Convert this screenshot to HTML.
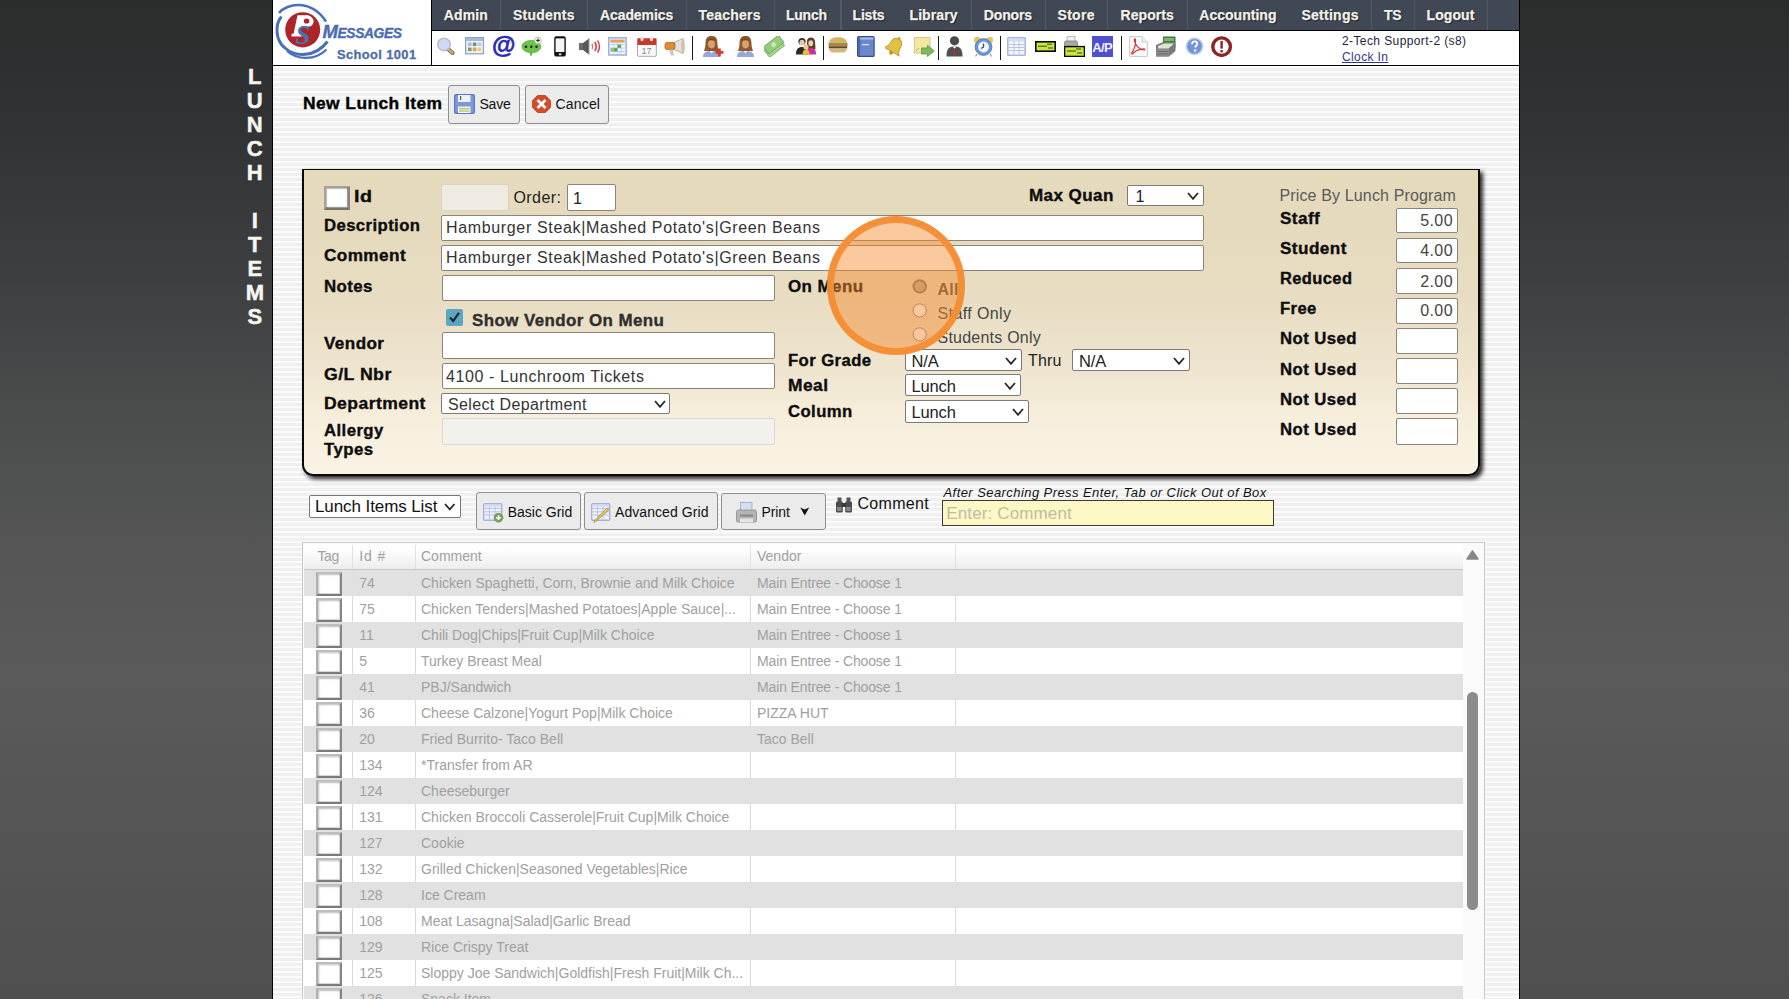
<!DOCTYPE html><html><head><meta charset="utf-8"><title>Lunch Items</title><style>
*{margin:0;padding:0;box-sizing:border-box}
html,body{width:1789px;height:999px;overflow:hidden}
body{position:relative;font-family:"Liberation Sans",sans-serif;
background:linear-gradient(180deg,#2b2c2c 0px,#313233 120px,#3c3d3e 260px,#4c4d4d 430px,#565656 560px,#5a5a5a 680px,#555 820px,#4f4f4f 999px);}
.a{position:absolute}
.t{position:absolute;white-space:pre}
</style></head><body>
<div class="a " style="left:272.0px;top:0.0px;width:1.0px;height:999.0px;background:#000;"></div>
<div class="a " style="left:273.0px;top:66.0px;width:1246.0px;height:933.0px;background:repeating-linear-gradient(180deg,#fbfbfb 0px,#fbfbfb 2.5px,#f0f0f0 2.5px,#f0f0f0 5px);"></div>
<div class="a " style="left:1519.0px;top:0.0px;width:1.0px;height:999.0px;background:#000;"></div>
<div class="a " style="left:273.0px;top:0.0px;width:158.0px;height:65.0px;background:#fff;"></div>
<div class="a " style="left:431.0px;top:0.0px;width:1.0px;height:65.0px;background:#000;"></div>
<div class="a " style="left:432.0px;top:0.0px;width:1087.0px;height:30.0px;background:#404755;"></div>
<div class="a " style="left:432.0px;top:30.0px;width:1087.0px;height:1.0px;background:#000;"></div>
<div class="a " style="left:432.0px;top:31.0px;width:1087.0px;height:34.0px;background:#fff;"></div>
<div class="a " style="left:273.0px;top:65.0px;width:1246.0px;height:1.0px;background:#000;"></div>
<div class="a " style="left:500.0px;top:0.0px;width:1.0px;height:30.0px;background:#525a68;"></div>
<div class="a " style="left:587.0px;top:0.0px;width:1.0px;height:30.0px;background:#525a68;"></div>
<div class="a " style="left:686.0px;top:0.0px;width:1.0px;height:30.0px;background:#525a68;"></div>
<div class="a " style="left:774.0px;top:0.0px;width:1.0px;height:30.0px;background:#525a68;"></div>
<div class="a " style="left:840.0px;top:0.0px;width:2.0px;height:30.0px;background:#525a68;"></div>
<div class="a " style="left:898.0px;top:0.0px;width:0.0px;height:30.0px;background:#525a68;"></div>
<div class="a " style="left:971.0px;top:0.0px;width:1.0px;height:30.0px;background:#525a68;"></div>
<div class="a " style="left:1045.0px;top:0.0px;width:1.0px;height:30.0px;background:#525a68;"></div>
<div class="a " style="left:1107.0px;top:0.0px;width:1.0px;height:30.0px;background:#525a68;"></div>
<div class="a " style="left:1187.0px;top:0.0px;width:1.0px;height:30.0px;background:#525a68;"></div>
<div class="a " style="left:1290.0px;top:0.0px;width:0.0px;height:30.0px;background:#525a68;"></div>
<div class="a " style="left:1371.0px;top:0.0px;width:1.0px;height:30.0px;background:#525a68;"></div>
<div class="a " style="left:1414.0px;top:0.0px;width:1.0px;height:30.0px;background:#525a68;"></div>
<div class="a " style="left:1487.0px;top:0.0px;width:1.0px;height:30.0px;background:#525a68;"></div>
<div class="t" style="left:443.8px;top:8.1px;font-size:14px;line-height:14px;color:#f2f2ea;font-weight:bold;letter-spacing:0.14px;text-shadow:1px 1px 1px #1a1d24;-webkit-text-stroke:0.25px #f2f2ea;">Admin</div>
<div class="t" style="left:513.0px;top:8.1px;font-size:14px;line-height:14px;color:#f2f2ea;font-weight:bold;letter-spacing:0.23px;text-shadow:1px 1px 1px #1a1d24;-webkit-text-stroke:0.25px #f2f2ea;">Students</div>
<div class="t" style="left:600.0px;top:8.1px;font-size:14px;line-height:14px;color:#f2f2ea;font-weight:bold;letter-spacing:-0.09px;text-shadow:1px 1px 1px #1a1d24;-webkit-text-stroke:0.25px #f2f2ea;">Academics</div>
<div class="t" style="left:698.5px;top:8.1px;font-size:14px;line-height:14px;color:#f2f2ea;font-weight:bold;letter-spacing:0.22px;text-shadow:1px 1px 1px #1a1d24;-webkit-text-stroke:0.25px #f2f2ea;">Teachers</div>
<div class="t" style="left:786.0px;top:8.1px;font-size:14px;line-height:14px;color:#f2f2ea;font-weight:bold;letter-spacing:-0.25px;text-shadow:1px 1px 1px #1a1d24;-webkit-text-stroke:0.25px #f2f2ea;">Lunch</div>
<div class="t" style="left:852.5px;top:8.1px;font-size:14px;line-height:14px;color:#f2f2ea;font-weight:bold;letter-spacing:-0.17px;text-shadow:1px 1px 1px #1a1d24;-webkit-text-stroke:0.25px #f2f2ea;">Lists</div>
<div class="t" style="left:909.5px;top:8.1px;font-size:14px;line-height:14px;color:#f2f2ea;font-weight:bold;letter-spacing:0.09px;text-shadow:1px 1px 1px #1a1d24;-webkit-text-stroke:0.25px #f2f2ea;">Library</div>
<div class="t" style="left:983.8px;top:8.1px;font-size:14px;line-height:14px;color:#f2f2ea;font-weight:bold;letter-spacing:-0.14px;text-shadow:1px 1px 1px #1a1d24;-webkit-text-stroke:0.25px #f2f2ea;">Donors</div>
<div class="t" style="left:1057.5px;top:8.1px;font-size:14px;line-height:14px;color:#f2f2ea;font-weight:bold;letter-spacing:0.30px;text-shadow:1px 1px 1px #1a1d24;-webkit-text-stroke:0.25px #f2f2ea;">Store</div>
<div class="t" style="left:1120.5px;top:8.1px;font-size:14px;line-height:14px;color:#f2f2ea;font-weight:bold;letter-spacing:0.07px;text-shadow:1px 1px 1px #1a1d24;-webkit-text-stroke:0.25px #f2f2ea;">Reports</div>
<div class="t" style="left:1199.3px;top:8.1px;font-size:14px;line-height:14px;color:#f2f2ea;font-weight:bold;letter-spacing:0.02px;text-shadow:1px 1px 1px #1a1d24;-webkit-text-stroke:0.25px #f2f2ea;">Accounting</div>
<div class="t" style="left:1301.5px;top:8.1px;font-size:14px;line-height:14px;color:#f2f2ea;font-weight:bold;letter-spacing:0.25px;text-shadow:1px 1px 1px #1a1d24;-webkit-text-stroke:0.25px #f2f2ea;">Settings</div>
<div class="t" style="left:1383.9px;top:8.1px;font-size:14px;line-height:14px;color:#f2f2ea;font-weight:bold;letter-spacing:-0.29px;text-shadow:1px 1px 1px #1a1d24;-webkit-text-stroke:0.25px #f2f2ea;">TS</div>
<div class="t" style="left:1426.5px;top:8.1px;font-size:14px;line-height:14px;color:#f2f2ea;font-weight:bold;letter-spacing:0.08px;text-shadow:1px 1px 1px #1a1d24;-webkit-text-stroke:0.25px #f2f2ea;">Logout</div>
<div class="t" style="left:1342.0px;top:35.2px;font-size:12px;line-height:12px;color:#1e1e3e;letter-spacing:0.40px;">2-Tech Support-2 (s8)</div>
<div class="t" style="left:1342.0px;top:51.4px;font-size:12px;line-height:12px;color:#34348e;letter-spacing:0.38px;text-decoration:underline;">Clock In</div>
<div class="t" style="left:239.8px;width:30px;text-align:center;top:65.5px;font-size:22px;line-height:22px;font-weight:bold;color:#f6f6f0;-webkit-text-stroke:0.5px #f6f6f0;">L</div>
<div class="t" style="left:239.8px;width:30px;text-align:center;top:89.5px;font-size:22px;line-height:22px;font-weight:bold;color:#f6f6f0;-webkit-text-stroke:0.5px #f6f6f0;">U</div>
<div class="t" style="left:239.8px;width:30px;text-align:center;top:113.6px;font-size:22px;line-height:22px;font-weight:bold;color:#f6f6f0;-webkit-text-stroke:0.5px #f6f6f0;">N</div>
<div class="t" style="left:239.8px;width:30px;text-align:center;top:137.6px;font-size:22px;line-height:22px;font-weight:bold;color:#f6f6f0;-webkit-text-stroke:0.5px #f6f6f0;">C</div>
<div class="t" style="left:239.8px;width:30px;text-align:center;top:161.7px;font-size:22px;line-height:22px;font-weight:bold;color:#f6f6f0;-webkit-text-stroke:0.5px #f6f6f0;">H</div>
<div class="t" style="left:239.8px;width:30px;text-align:center;top:209.8px;font-size:22px;line-height:22px;font-weight:bold;color:#f6f6f0;-webkit-text-stroke:0.5px #f6f6f0;">I</div>
<div class="t" style="left:239.8px;width:30px;text-align:center;top:233.8px;font-size:22px;line-height:22px;font-weight:bold;color:#f6f6f0;-webkit-text-stroke:0.5px #f6f6f0;">T</div>
<div class="t" style="left:239.8px;width:30px;text-align:center;top:257.9px;font-size:22px;line-height:22px;font-weight:bold;color:#f6f6f0;-webkit-text-stroke:0.5px #f6f6f0;">E</div>
<div class="t" style="left:239.8px;width:30px;text-align:center;top:281.9px;font-size:22px;line-height:22px;font-weight:bold;color:#f6f6f0;-webkit-text-stroke:0.5px #f6f6f0;">M</div>
<div class="t" style="left:239.8px;width:30px;text-align:center;top:306.0px;font-size:22px;line-height:22px;font-weight:bold;color:#f6f6f0;-webkit-text-stroke:0.5px #f6f6f0;">S</div>
<svg class="a" style="left:273.0px;top:0.0px" width="60" height="64" viewBox="0 0 60 64">
<path d="M6 13 C14 3 38 -1 53 21.5" fill="none" stroke="#4a70b6" stroke-width="2.6"/>
<path d="M8.5 16.5 C2 24 2 40 12 48 C22 57 42 58 54.5 41.5" fill="none" stroke="#4a70b6" stroke-width="3"/>
<path d="M14 51 C24 60 42 61 53.5 49.5" fill="none" stroke="#4a70b6" stroke-width="2.2"/>
<ellipse cx="29.7" cy="29.8" rx="17.5" ry="17.6" fill="#ad2529"/>
<ellipse cx="33" cy="21.3" rx="7.6" ry="6.2" fill="#fff"/><ellipse cx="33.6" cy="21" rx="2.8" ry="2.6" fill="#ad2529"/>
<path d="M24.5 15.2 L31 15.2 L26.8 35 L20.3 35Z" fill="#fff"/><path d="M18.8 33.8 L29 33.8 L28.5 36.6 L18.3 36.6Z" fill="#fff"/>
<text x="22.5" y="43.5" font-family="Liberation Serif" font-weight="bold" font-style="italic" font-size="27" fill="#4a70b6">S</text>
</svg>
<div class="t" style="left:322.5px;top:22px;font-size:18.5px;line-height:20px;font-weight:bold;font-style:italic;color:#4b6db2;letter-spacing:-0.5px;-webkit-text-stroke:0.4px #4b6db2;">M<span style="font-size:13.8px;letter-spacing:-0.35px">ESSAGES</span></div>
<div class="t" style="left:337.0px;top:48.5px;font-size:12.5px;line-height:12.5px;color:#4d6da8;transform:scaleX(1.027);transform-origin:0 0;font-weight:bold;letter-spacing:0.40px;-webkit-text-stroke:0.3px #4d6da8;">School 1001</div>
<div class="a " style="left:692.0px;top:36.0px;width:1.0px;height:24.0px;background:#1a1a1a;"></div>
<div class="a " style="left:823.0px;top:36.0px;width:1.0px;height:24.0px;background:#1a1a1a;"></div>
<div class="a " style="left:938.0px;top:36.0px;width:1.0px;height:24.0px;background:#1a1a1a;"></div>
<div class="a " style="left:1000.0px;top:36.0px;width:1.0px;height:24.0px;background:#1a1a1a;"></div>
<div class="a " style="left:1121.0px;top:36.0px;width:1.0px;height:24.0px;background:#1a1a1a;"></div>
<svg class="a" style="left:436.0px;top:37.0px" width="19" height="18" viewBox="0 0 19 18"><line x1="11.5" y1="11.5" x2="16.5" y2="16" stroke="#6b5a3a" stroke-width="4" stroke-linecap="round"/><line x1="11.5" y1="11.5" x2="16.5" y2="16" stroke="#c8b078" stroke-width="2.4" stroke-linecap="round"/><circle cx="8" cy="7.4" r="6.3" fill="#cfdaf2" stroke="#b4bac6" stroke-width="1.4"/></svg>
<svg class="a" style="left:465.0px;top:37.0px" width="19" height="17.5" viewBox="0 0 19 17.5"><rect x="0.6" y="0.6" width="17.8" height="16.2" fill="#eef2fb" stroke="#8d9dc6" stroke-width="1.2"/><rect x="1" y="1" width="17" height="3" fill="#a9b8df"/><rect x="3" y="5.5" width="3.6" height="3.6" fill="#a9bde8"/><rect x="7.8" y="5.5" width="3.6" height="3.6" fill="#6e9a5c"/><rect x="12.6" y="5.5" width="3.6" height="3.6" fill="#b9c9ee"/><rect x="3" y="10.6" width="3.6" height="3.6" fill="#7ba05e"/><rect x="7.8" y="10.6" width="3.6" height="3.6" fill="#df9e55"/><rect x="12.6" y="10.6" width="3.6" height="3.6" fill="#e6cf74"/></svg>
<div class="t" style="left:492px;top:33px;font-size:24px;line-height:24px;font-weight:bold;color:#2a2ab4;-webkit-text-stroke:0.6px #2a2ab4;">@</div>
<svg class="a" style="left:521.0px;top:36.0px" width="22" height="21" viewBox="0 0 22 21"><path d="M10.5 4.5 C16 4.5 19.8 7 19.8 10.5 C19.8 14 16 16.5 11.5 16.5 L10 19.8 L8.6 16.4 C4 16 1 13.6 1 10.5 C1 7 5 4.5 10.5 4.5Z" fill="#6cc24a" stroke="#5aa83c" stroke-width="0.8"/><circle cx="5" cy="10.8" r="1.3" fill="#1d2a16"/><circle cx="10.3" cy="10.8" r="1.3" fill="#1d2a16"/><circle cx="15.5" cy="10.8" r="1.3" fill="#1d2a16"/><circle cx="17" cy="4.4" r="3.4" fill="#f4f8f0" stroke="#9cc08a" stroke-width="0.8"/><path d="M17 2.6 V6.2 M15.2 4.4 H18.8" stroke="#222" stroke-width="1"/></svg>
<svg class="a" style="left:554.0px;top:36.0px" width="12" height="21" viewBox="0 0 12 21"><rect x="0.2" y="0.2" width="11.6" height="20.4" rx="2.2" fill="#111"/><rect x="1.6" y="2.4" width="8.8" height="13.6" fill="#f4f4f4"/><rect x="4.8" y="17.4" width="2.6" height="1.8" fill="#ddd"/></svg>
<svg class="a" style="left:578.0px;top:38.0px" width="23" height="17" viewBox="0 0 23 17"><rect x="1" y="5" width="4.5" height="7" fill="#6a6a6a"/><path d="M5 5 L11 0.5 L11 16.5 L5 12Z" fill="#585858"/><path d="M11 0.5 L11 16.5" stroke="#999" stroke-width="1"/><path d="M14 6 Q15.5 8.5 14 11" fill="none" stroke="#d87080" stroke-width="1.6"/><path d="M16.8 4 Q19.6 8.5 16.8 13" fill="none" stroke="#cf4a5a" stroke-width="1.8"/><path d="M19.6 2.5 Q23.2 8.5 19.6 14.5" fill="none" stroke="#c83848" stroke-width="1.4"/></svg>
<svg class="a" style="left:608.0px;top:37.0px" width="19" height="19" viewBox="0 0 19 19"><rect x="0.8" y="0.8" width="17.4" height="17.2" fill="#eef4ff" stroke="#a3b3de" stroke-width="1.6"/><rect x="2.4" y="2.6" width="14.2" height="3" fill="#e4a25a"/><path d="M2.4 7.5 H16.6 M2.4 11 H16.6 M2.4 14.5 H16.6 M6 5.6 V16.5 M9.5 5.6 V16.5 M13 5.6 V16.5" stroke="#b8c8e8" stroke-width="0.8"/><rect x="9.6" y="7.6" width="3.3" height="3.3" fill="#5ea050"/><rect x="6.1" y="11.1" width="3.3" height="3.3" fill="#5ea050"/><rect x="2.6" y="11.1" width="3.3" height="3.3" fill="#8cc070"/></svg>
<svg class="a" style="left:636.5px;top:36.0px" width="20" height="21" viewBox="0 0 20 21"><rect x="0.5" y="2.5" width="18.8" height="17.8" rx="1" fill="#fafafa" stroke="#a8a8a8" stroke-width="1"/><rect x="0.5" y="2.5" width="18.8" height="6.5" fill="#c8392b"/><rect x="3.5" y="0.5" width="3" height="4.5" rx="1" fill="#e8e0d8"/><rect x="13" y="0.5" width="3" height="4.5" rx="1" fill="#e8e0d8"/><text x="4.5" y="17.5" font-family="Liberation Sans" font-size="9" fill="#888">17</text></svg>
<svg class="a" style="left:664.0px;top:38.0px" width="22" height="19" viewBox="0 0 22 19"><path d="M10 4.5 L19 0.5 L19 15.5 L10 11.5Z" fill="#e2e2e2" stroke="#b8b0a0" stroke-width="1"/><ellipse cx="19" cy="8" rx="1.8" ry="7.4" fill="#d0c0a8"/><rect x="1" y="4.5" width="10" height="7" rx="2" fill="#e08a32" stroke="#b06020" stroke-width="0.8"/><path d="M5 11.5 L7 17.5 L10 17.5 L9 11.5Z" fill="#c8c8c8"/></svg>
<svg class="a" style="left:703.0px;top:36.0px" width="21" height="21" viewBox="0 0 21 21"><path d="M2.5 8 C2.5 1.5 5 0 8.5 0 C12 0 14.5 1.5 14.5 8 C14.5 11 15.5 13 16 15 L1 15 C1.5 13 2.5 11 2.5 8Z" fill="#93582a"/><ellipse cx="8.5" cy="8" rx="3.4" ry="4.4" fill="#d6a270"/><path d="M5 3.5 C6 2 11 2 12 4 L12 5 C10 4 7 4 5 5Z" fill="#7a4520"/><path d="M0 21 C0 16.5 3 15 8.5 15 C14 15 17 16.5 17 21Z" fill="#93a9de"/><path d="M6.5 15 L8.5 17.5 L10.5 15Z" fill="#f4f4f4"/><path d="M12.5 15 H15 V12.5 H17.8 V15 H20.5 V17.8 H17.8 V20.6 H15 V17.8 H12.5Z" fill="#d93a2a"/></svg>
<svg class="a" style="left:737.0px;top:36.0px" width="21" height="21" viewBox="0 0 21 21"><path d="M2.5 8 C2.5 1.5 5 0 8.5 0 C12 0 14.5 1.5 14.5 8 C14.5 11 15.5 13 16 15 L1 15 C1.5 13 2.5 11 2.5 8Z" fill="#93582a"/><ellipse cx="8.5" cy="8" rx="3.4" ry="4.4" fill="#d6a270"/><path d="M5 3.5 C6 2 11 2 12 4 L12 5 C10 4 7 4 5 5Z" fill="#7a4520"/><path d="M0 21 C0 16.5 3 15 8.5 15 C14 15 17 16.5 17 21Z" fill="#93a9de"/><path d="M6.5 15 L8.5 17.5 L10.5 15Z" fill="#f4f4f4"/></svg>
<svg class="a" style="left:764.0px;top:36.0px" width="21" height="21" viewBox="0 0 21 21"><g transform="rotate(-38 10.5 10.5)"><rect x="0" y="7" width="19" height="9" fill="#a6d88e" stroke="#6aa458" stroke-width="0.8"/><rect x="1.5" y="4" width="19" height="9" fill="#94cc7c" stroke="#6aa458" stroke-width="0.8"/><circle cx="11" cy="8.5" r="2.4" fill="#c8ecb8"/></g></svg>
<svg class="a" style="left:796.0px;top:37.0px" width="20" height="18" viewBox="0 0 20 18"><circle cx="6" cy="4.5" r="3.6" fill="#2b2b2b"/><ellipse cx="6" cy="5.8" rx="2.6" ry="3" fill="#e8c8a8"/><path d="M0 17.5 C0 12 2 10 6 10 C10 10 11 12 11 17.5Z" fill="#2a2a2a"/><path d="M11 4 C11 1.5 13 0.5 15 0.5 C17.5 0.5 19 2 19 5 L19.5 12 L11 12Z" fill="#5a3a2a"/><ellipse cx="14.8" cy="6.3" rx="2.4" ry="3" fill="#f0d0b0"/><path d="M10 17.5 C10 12.5 12 11 15 11 C18.5 11 20 12.5 20 17.5Z" fill="#c8309a"/><circle cx="10" cy="10" r="2.6" fill="#f0c890"/><path d="M6.5 17.5 C6.5 14 8 12.5 10 12.5 C12 12.5 13.5 14 13.5 17.5Z" fill="#e8c030"/></svg>
<svg class="a" style="left:828.0px;top:37.0px" width="20" height="16" viewBox="0 0 20 16"><path d="M1 6.5 C1 2 5 0.3 10 0.3 C15 0.3 19 2 19 6.5Z" fill="#d4b26a"/><rect x="0.5" y="6" width="19" height="2.2" fill="#7aa040"/><rect x="0.5" y="8" width="19" height="1.4" fill="#e86a3a"/><rect x="0.8" y="9.3" width="18.4" height="2.2" fill="#5a4a28"/><path d="M1 11.4 H19 C19 14 17 15.6 14 15.6 H6 C3 15.6 1 14 1 11.4Z" fill="#d8b878"/></svg>
<svg class="a" style="left:857.0px;top:36.0px" width="18" height="21" viewBox="0 0 18 21"><rect x="0.6" y="0.6" width="16.5" height="19.8" rx="1" fill="#6a88cc" stroke="#3a4c88" stroke-width="1.2"/><rect x="1.5" y="1.5" width="15" height="2" fill="#a8bcec"/><rect x="5" y="8" width="7" height="1.2" fill="#dce6fa"/><rect x="1.2" y="1.2" width="2" height="19" fill="#4e66aa"/></svg>
<svg class="a" style="left:885.0px;top:36.0px" width="20" height="21" viewBox="0 0 20 21"><g transform="rotate(30 10 10)"><path d="M10 2 C6 2 4.5 5 4.5 9 C4.5 13 3 15 1.5 16.5 H18.5 C17 15 15.5 13 15.5 9 C15.5 5 14 2 10 2Z" fill="#e2c043" stroke="#b89a28" stroke-width="0.9"/><circle cx="10" cy="1.6" r="1.6" fill="#c8a838"/><circle cx="10" cy="17.8" r="2" fill="#b89a28"/></g></svg>
<svg class="a" style="left:914.0px;top:37.0px" width="21" height="20" viewBox="0 0 21 20"><rect x="0.5" y="0.5" width="15.5" height="15.5" fill="#f4e8a0" stroke="#d8c888" stroke-width="1"/><path d="M2 14 L5 11" stroke="#c8a878" stroke-width="1"/><path d="M7.5 11 H13.5 V8.3 L20.2 14 L13.5 19.6 V17 H7.5Z" fill="#7cba5a" stroke="#5a9840" stroke-width="0.8"/></svg>
<svg class="a" style="left:945.5px;top:36.0px" width="17" height="21" viewBox="0 0 17 21"><circle cx="8.5" cy="4.8" r="4.6" fill="#4a4a4a"/><path d="M0.5 20.5 C0.5 12.5 3 10.5 8.5 10.5 C14 10.5 16.5 12.5 16.5 20.5Z" fill="#505050"/><path d="M6.5 10.6 L8.5 12.8 L10.5 10.6Z" fill="#fff"/><path d="M8.5 11.8 L7.3 18 L8.5 19.4 L9.7 18Z" fill="#d02828"/></svg>
<svg class="a" style="left:973.0px;top:36.0px" width="21" height="21" viewBox="0 0 21 21"><circle cx="4.2" cy="4" r="3.3" fill="#e6c850"/><circle cx="16.8" cy="4" r="3.3" fill="#e6c850"/><circle cx="10.5" cy="11" r="8.4" fill="#6b96dc" stroke="#4a74b8" stroke-width="0.8"/><circle cx="10.5" cy="11" r="5.4" fill="#f6f8fc"/><path d="M10.5 7.5 V11 L8 12.5" stroke="#555" stroke-width="1.4" fill="none"/><path d="M4 18 L2.5 20.5 M17 18 L18.5 20.5" stroke="#999" stroke-width="1.2"/></svg>
<svg class="a" style="left:1007.0px;top:37.0px" width="19" height="19" viewBox="0 0 19 19"><rect x="0.8" y="0.8" width="17.4" height="17.4" rx="0.8" fill="#f6f8fe" stroke="#a6b6e0" stroke-width="1.6"/><rect x="2" y="2" width="15" height="2.5" fill="#cfdcf4"/><path d="M2 7.5 H17 M2 10.5 H17 M2 13.5 H17 M7 4.5 V17 M12 4.5 V17" stroke="#b0c0e4" stroke-width="0.9"/></svg>
<svg class="a" style="left:1035.0px;top:41.0px" width="21" height="11" viewBox="0 0 21 11"><rect x="0.8" y="0.8" width="19.4" height="9.4" fill="#c6e640" stroke="#0a0a0a" stroke-width="1.6"/><path d="M3 5.2 H12 M12 3.2 H17 M13 7 H18" stroke="#2a3a10" stroke-width="0.9"/></svg>
<svg class="a" style="left:1063.5px;top:36.0px" width="21" height="21" viewBox="0 0 21 21"><rect x="3" y="0.5" width="8" height="5" fill="#f0f0f0" stroke="#aaa" stroke-width="0.8"/><rect x="0.5" y="5" width="13" height="7" rx="1.5" fill="#a8a8a8" stroke="#808080" stroke-width="0.8"/><rect x="0.6" y="10.6" width="19.8" height="9.8" fill="#c6e640" stroke="#0a0a0a" stroke-width="1.4"/><path d="M3 15 H12 M12 13 H17 M13 17 H18" stroke="#2a3a10" stroke-width="0.9"/></svg>
<div class="a " style="left:1092.0px;top:36.0px;width:21.0px;height:21.0px;background:#4f50cf;"></div>
<div class="t" style="left:1092.3px;top:40.5px;font-size:13px;line-height:13px;font-weight:bold;color:#f0f0ff;letter-spacing:-0.6px">A/P</div>
<svg class="a" style="left:1129.0px;top:36.0px" width="19" height="21" viewBox="0 0 19 21"><path d="M0.6 0.6 H13 L18.4 6 V20.4 H0.6Z" fill="#fbfbfb" stroke="#c8c8c8" stroke-width="1"/><path d="M13 0.6 V6 H18.4" fill="#eee" stroke="#c8c8c8" stroke-width="0.8"/><path d="M2 18 C5 14 7 8 6.5 3.5 C6 2 5 3 5.5 5 C6.5 9 10 13.5 15 14 C16.5 14 16 12.5 14 12.8 C10 13.3 5.5 15 3 18.5" fill="none" stroke="#d03a3a" stroke-width="1.2"/></svg>
<svg class="a" style="left:1155.0px;top:36.0px" width="21" height="21" viewBox="0 0 21 21"><path d="M8 0.5 H20.5 V12 H8Z" fill="#3e7a3a"/><rect x="9" y="2" width="10" height="3" fill="#7ab870"/><path d="M1 9 L8 6 L20.5 6 L20.5 15 L14 20.5 L1 20.5Z" fill="#7a7a7a"/><path d="M3 10 L9 7.5 L19 7.5 L13.5 12.5 L3 12.5Z" fill="#d8e8c8"/><path d="M1 13 H14 V20.5 H1Z" fill="#8c8c8c"/><path d="M2 15.5 H13 M2 18 H13" stroke="#666" stroke-width="0.8"/></svg>
<svg class="a" style="left:1185.0px;top:37.0px" width="19" height="19" viewBox="0 0 19 19"><circle cx="9.5" cy="9.3" r="9" fill="#c4d2f2"/><circle cx="9.5" cy="9.3" r="7.4" fill="#7592d2"/><path d="M7 7.2 C7 5.2 8.2 4.4 9.6 4.4 C11.2 4.4 12.2 5.4 12.2 6.8 C12.2 8.4 10.2 8.8 10.2 10.6" fill="none" stroke="#fff" stroke-width="1.9"/><circle cx="10.1" cy="13.4" r="1.2" fill="#fff"/></svg>
<svg class="a" style="left:1211.0px;top:36.0px" width="22" height="22" viewBox="0 0 22 22"><circle cx="10.6" cy="10.7" r="8.8" fill="#fff" stroke="#8e2424" stroke-width="3.4"/><rect x="9.4" y="5" width="2.4" height="7.6" fill="#8e2424"/><rect x="9.4" y="14" width="2.4" height="2.4" fill="#8e2424"/></svg>
<div class="a " style="left:302.0px;top:169.0px;width:1178.0px;height:307.0px;border:2px solid #0a0a0a;border-top-width:1.5px;border-radius:0 0 11px 11px;background:linear-gradient(180deg,#e6dabd 0px,#e6dabe 60px,#e8ddc2 130px,#efe5cf 200px,#f8f0df 260px,#fbf3e3 307px);box-shadow:3px 3px 4px rgba(0,0,0,0.85);"></div>
<div class="t" style="left:353.8px;top:188.8px;font-size:16px;line-height:16px;color:#0d0d0d;transform:scaleX(1.231);transform-origin:0 0;font-weight:bold;letter-spacing:0.40px;-webkit-text-stroke:0.35px currentColor;">Id</div>
<div class="t" style="left:323.9px;top:217.6px;font-size:16px;line-height:16px;color:#0d0d0d;transform:scaleX(1.043);transform-origin:0 0;font-weight:bold;letter-spacing:0.40px;-webkit-text-stroke:0.35px currentColor;">Description</div>
<div class="t" style="left:323.9px;top:248.1px;font-size:16px;line-height:16px;color:#0d0d0d;transform:scaleX(1.071);transform-origin:0 0;font-weight:bold;letter-spacing:0.40px;-webkit-text-stroke:0.35px currentColor;">Comment</div>
<div class="t" style="left:324.0px;top:279.1px;font-size:16px;line-height:16px;color:#0d0d0d;transform:scaleX(1.053);transform-origin:0 0;font-weight:bold;letter-spacing:0.40px;-webkit-text-stroke:0.35px currentColor;">Notes</div>
<div class="t" style="left:324.0px;top:336.1px;font-size:16px;line-height:16px;color:#0d0d0d;transform:scaleX(1.067);transform-origin:0 0;font-weight:bold;letter-spacing:0.40px;-webkit-text-stroke:0.35px currentColor;">Vendor</div>
<div class="t" style="left:324.0px;top:366.6px;font-size:16px;line-height:16px;color:#0d0d0d;transform:scaleX(1.107);transform-origin:0 0;font-weight:bold;letter-spacing:0.40px;-webkit-text-stroke:0.35px currentColor;">G/L Nbr</div>
<div class="t" style="left:324.0px;top:396.1px;font-size:16px;line-height:16px;color:#0d0d0d;transform:scaleX(1.096);transform-origin:0 0;font-weight:bold;letter-spacing:0.40px;-webkit-text-stroke:0.35px currentColor;">Department</div>
<div class="t" style="left:324.0px;top:422.6px;font-size:16px;line-height:16px;color:#0d0d0d;transform:scaleX(1.047);transform-origin:0 0;font-weight:bold;letter-spacing:0.40px;-webkit-text-stroke:0.35px currentColor;">Allergy</div>
<div class="t" style="left:324.0px;top:442.1px;font-size:16px;line-height:16px;color:#0d0d0d;transform:scaleX(1.050);transform-origin:0 0;font-weight:bold;letter-spacing:0.40px;-webkit-text-stroke:0.35px currentColor;">Types</div>
<div class="t" style="left:1029.0px;top:188.1px;font-size:16px;line-height:16px;color:#0d0d0d;transform:scaleX(1.064);transform-origin:0 0;font-weight:bold;letter-spacing:0.40px;-webkit-text-stroke:0.35px currentColor;">Max Quan</div>
<div class="t" style="left:787.7px;top:279.4px;font-size:16px;line-height:16px;color:#0d0d0d;transform:scaleX(1.059);transform-origin:0 0;font-weight:bold;letter-spacing:0.40px;-webkit-text-stroke:0.35px currentColor;">On Menu</div>
<div class="t" style="left:787.5px;top:352.9px;font-size:16px;line-height:16px;color:#0d0d0d;transform:scaleX(1.042);transform-origin:0 0;font-weight:bold;letter-spacing:0.40px;-webkit-text-stroke:0.35px currentColor;">For Grade</div>
<div class="t" style="left:787.5px;top:378.0px;font-size:16px;line-height:16px;color:#0d0d0d;transform:scaleX(1.088);transform-origin:0 0;font-weight:bold;letter-spacing:0.40px;-webkit-text-stroke:0.35px currentColor;">Meal</div>
<div class="t" style="left:787.5px;top:403.8px;font-size:16px;line-height:16px;color:#0d0d0d;transform:scaleX(1.045);transform-origin:0 0;font-weight:bold;letter-spacing:0.40px;-webkit-text-stroke:0.35px currentColor;">Column</div>
<div class="t" style="left:1279.5px;top:210.5px;font-size:16px;line-height:16px;color:#0d0d0d;transform:scaleX(1.071);transform-origin:0 0;font-weight:bold;letter-spacing:0.40px;-webkit-text-stroke:0.35px currentColor;">Staff</div>
<div class="t" style="left:1279.5px;top:240.7px;font-size:16px;line-height:16px;color:#0d0d0d;transform:scaleX(1.072);transform-origin:0 0;font-weight:bold;letter-spacing:0.40px;-webkit-text-stroke:0.35px currentColor;">Student</div>
<div class="t" style="left:1279.5px;top:270.8px;font-size:16px;line-height:16px;color:#0d0d0d;transform:scaleX(1.029);transform-origin:0 0;font-weight:bold;letter-spacing:0.40px;-webkit-text-stroke:0.35px currentColor;">Reduced</div>
<div class="t" style="left:1279.5px;top:300.9px;font-size:16px;line-height:16px;color:#0d0d0d;transform:scaleX(1.037);transform-origin:0 0;font-weight:bold;letter-spacing:0.40px;-webkit-text-stroke:0.35px currentColor;">Free</div>
<div class="t" style="left:1279.5px;top:330.8px;font-size:16px;line-height:16px;color:#0d0d0d;transform:scaleX(1.046);transform-origin:0 0;font-weight:bold;letter-spacing:0.40px;-webkit-text-stroke:0.35px currentColor;">Not Used</div>
<div class="t" style="left:1279.5px;top:361.8px;font-size:16px;line-height:16px;color:#0d0d0d;transform:scaleX(1.046);transform-origin:0 0;font-weight:bold;letter-spacing:0.40px;-webkit-text-stroke:0.35px currentColor;">Not Used</div>
<div class="t" style="left:1279.5px;top:391.9px;font-size:16px;line-height:16px;color:#0d0d0d;transform:scaleX(1.046);transform-origin:0 0;font-weight:bold;letter-spacing:0.40px;-webkit-text-stroke:0.35px currentColor;">Not Used</div>
<div class="t" style="left:1279.5px;top:422.3px;font-size:16px;line-height:16px;color:#0d0d0d;transform:scaleX(1.046);transform-origin:0 0;font-weight:bold;letter-spacing:0.40px;-webkit-text-stroke:0.35px currentColor;">Not Used</div>
<div class="t" style="left:472.0px;top:312.9px;font-size:16px;line-height:16px;color:#2e2e2e;transform:scaleX(1.058);transform-origin:0 0;font-weight:bold;letter-spacing:0.40px;-webkit-text-stroke:0.35px currentColor;">Show Vendor On Menu</div>
<div class="t" style="left:513.5px;top:189.8px;font-size:16px;line-height:16px;color:#1e1e1e;letter-spacing:0.41px;">Order:</div>
<div class="t" style="left:1279.5px;top:188.1px;font-size:16px;line-height:16px;color:#5a5a5a;letter-spacing:0.14px;">Price By Lunch Program</div>
<div class="t" style="left:937.5px;top:306.4px;font-size:16px;line-height:16px;color:#454545;letter-spacing:0.39px;">Staff Only</div>
<div class="t" style="left:937.5px;top:329.9px;font-size:16px;line-height:16px;color:#454545;letter-spacing:0.23px;">Students Only</div>
<div class="t" style="left:1028.0px;top:352.9px;font-size:16px;line-height:16px;color:#1e1e1e;letter-spacing:0.13px;">Thru</div>
<div class="t" style="left:937.5px;top:281.7px;font-size:16px;line-height:16px;color:#5a4a3a;font-weight:bold;letter-spacing:0.28px;">All</div>
<div class="a " style="left:324.0px;top:186.0px;width:26.0px;height:24.0px;background:#fff;border:2px solid #a6a29a;border-right-color:#8a867e;border-bottom-color:#78746c;box-shadow:inset 1px 1px 1px rgba(60,55,45,0.35), inset -1px -1px 1px rgba(60,55,45,0.55);"></div>
<div class="a " style="left:441.0px;top:184.0px;width:68.0px;height:27.0px;background:#efebe1;border:1px solid #d9d3c6;border-radius:2px;"></div>
<div class="a " style="left:567.0px;top:184.0px;width:49.0px;height:27.0px;background:#fff;border:1px solid #8a857c;border-radius:2px;"></div>
<div class="t" style="left:573.0px;top:190.6px;font-size:16px;line-height:16px;color:#222;">1</div>
<div class="a " style="left:441.0px;top:215.0px;width:763.0px;height:26.0px;background:#fff;border:1px solid #8a857c;border-radius:2px;"></div>
<div class="t" style="left:446.0px;top:219.8px;font-size:16px;line-height:16px;color:#333;letter-spacing:0.65px;">Hamburger Steak|Mashed Potato's|Green Beans</div>
<div class="a " style="left:441.0px;top:245.0px;width:763.0px;height:26.0px;background:#fff;border:1px solid #8a857c;border-radius:2px;"></div>
<div class="t" style="left:446.0px;top:250.1px;font-size:16px;line-height:16px;color:#333;letter-spacing:0.65px;">Hamburger Steak|Mashed Potato's|Green Beans</div>
<div class="a " style="left:442.0px;top:275.0px;width:333.0px;height:26.0px;background:#fff;border:1px solid #8a857c;border-radius:2px;"></div>
<div class="a " style="left:442.0px;top:332.0px;width:333.0px;height:27.0px;background:#fff;border:1px solid #8a857c;border-radius:2px;"></div>
<div class="a " style="left:442.0px;top:363.0px;width:333.0px;height:26.0px;background:#fff;border:1px solid #8a857c;border-radius:2px;"></div>
<div class="t" style="left:446.0px;top:369.1px;font-size:16px;line-height:16px;color:#333;letter-spacing:0.60px;">4100 - Lunchroom Tickets</div>
<div class="a " style="left:442.0px;top:418.0px;width:333.0px;height:27.0px;background:#f3f1ec;border:1px solid #dcd8d0;border-radius:2px;"></div>
<div class="a " style="left:441.0px;top:393.0px;width:229.0px;height:21.0px;background:#fff;border:1px solid #7d7a76;border-radius:2px;"></div>
<div class="t" style="left:448.0px;top:396.6px;font-size:16px;line-height:16px;color:#333;letter-spacing:0.37px;">Select Department</div>
<svg class="a" style="left:654.0px;top:399.7px" width="12" height="8" viewBox="0 0 12 8"><path d="M1 1 L6.0 6.8 L11 1" fill="none" stroke="#262626" stroke-width="1.8"/></svg>
<div class="a " style="left:1127.0px;top:185.0px;width:77.0px;height:21.0px;background:#fff;border:1px solid #7d7a76;border-radius:2px;"></div>
<div class="t" style="left:1135.5px;top:189.1px;font-size:16px;line-height:16px;color:#222;">1</div>
<svg class="a" style="left:1187.3px;top:191.6px" width="12" height="8" viewBox="0 0 12 8"><path d="M1 1 L6.0 6.8 L11 1" fill="none" stroke="#262626" stroke-width="1.8"/></svg>
<div class="a " style="left:905.0px;top:349.0px;width:117.0px;height:22.0px;background:#fff;border:1px solid #7d7a76;border-radius:2px;"></div>
<div class="t" style="left:911.5px;top:352.6px;font-size:16.5px;line-height:16.5px;color:#222;letter-spacing:-0.15px;">N/A</div>
<svg class="a" style="left:1005.0px;top:356.6px" width="12" height="8" viewBox="0 0 12 8"><path d="M1 1 L6.0 6.8 L11 1" fill="none" stroke="#262626" stroke-width="1.8"/></svg>
<div class="a " style="left:1072.0px;top:349.0px;width:118.0px;height:22.0px;background:#fff;border:1px solid #7d7a76;border-radius:2px;"></div>
<div class="t" style="left:1079.0px;top:352.6px;font-size:16.5px;line-height:16.5px;color:#222;letter-spacing:-0.15px;">N/A</div>
<svg class="a" style="left:1173.3px;top:356.6px" width="12" height="8" viewBox="0 0 12 8"><path d="M1 1 L6.0 6.8 L11 1" fill="none" stroke="#262626" stroke-width="1.8"/></svg>
<div class="a " style="left:905.0px;top:374.0px;width:116.0px;height:22.0px;background:#fff;border:1px solid #7d7a76;border-radius:2px;"></div>
<div class="t" style="left:911.5px;top:377.6px;font-size:16.5px;line-height:16.5px;color:#222;letter-spacing:-0.14px;">Lunch</div>
<svg class="a" style="left:1004.3px;top:381.6px" width="12" height="8" viewBox="0 0 12 8"><path d="M1 1 L6.0 6.8 L11 1" fill="none" stroke="#262626" stroke-width="1.8"/></svg>
<div class="a " style="left:905.0px;top:400.0px;width:124.0px;height:23.0px;background:#fff;border:1px solid #7d7a76;border-radius:2px;"></div>
<div class="t" style="left:911.5px;top:403.6px;font-size:16.5px;line-height:16.5px;color:#222;letter-spacing:-0.14px;">Lunch</div>
<svg class="a" style="left:1012.1px;top:407.7px" width="12" height="8" viewBox="0 0 12 8"><path d="M1 1 L6.0 6.8 L11 1" fill="none" stroke="#262626" stroke-width="1.8"/></svg>
<div class="a " style="left:1396.0px;top:208.0px;width:62.0px;height:25.0px;background:#fff;border:1px solid #8a857c;border-radius:2px;"></div>
<div class="t" style="left:1420.2px;top:212.7px;font-size:16px;line-height:16px;color:#444;letter-spacing:0.40px;">5.00</div>
<div class="a " style="left:1396.0px;top:238.0px;width:62.0px;height:25.0px;background:#fff;border:1px solid #8a857c;border-radius:2px;"></div>
<div class="t" style="left:1420.2px;top:242.8px;font-size:16px;line-height:16px;color:#444;letter-spacing:0.40px;">4.00</div>
<div class="a " style="left:1396.0px;top:268.0px;width:62.0px;height:26.0px;background:#fff;border:1px solid #8a857c;border-radius:2px;"></div>
<div class="t" style="left:1420.2px;top:273.6px;font-size:16px;line-height:16px;color:#444;letter-spacing:0.40px;">2.00</div>
<div class="a " style="left:1396.0px;top:298.0px;width:62.0px;height:26.0px;background:#fff;border:1px solid #8a857c;border-radius:2px;"></div>
<div class="t" style="left:1420.2px;top:303.4px;font-size:16px;line-height:16px;color:#444;letter-spacing:0.40px;">0.00</div>
<div class="a " style="left:1396.0px;top:328.0px;width:62.0px;height:26.0px;background:#fff;border:1px solid #8a857c;border-radius:2px;"></div>
<div class="a " style="left:1396.0px;top:358.0px;width:62.0px;height:26.0px;background:#fff;border:1px solid #8a857c;border-radius:2px;"></div>
<div class="a " style="left:1396.0px;top:388.0px;width:62.0px;height:26.0px;background:#fff;border:1px solid #8a857c;border-radius:2px;"></div>
<div class="a " style="left:1396.0px;top:418.0px;width:62.0px;height:27.0px;background:#fff;border:1px solid #8a857c;border-radius:2px;"></div>
<div class="a " style="left:446.0px;top:309.0px;width:17.0px;height:17.0px;background:#5aa7c2;border-radius:2px;"></div>
<svg class="a" style="left:446.0px;top:309.0px" width="17" height="17" viewBox="0 0 17 17"><path d="M4 8.5 L7.2 12 L13 3.8" fill="none" stroke="#1a2a30" stroke-width="2.2"/></svg>
<svg class="a" style="left:912.0px;top:279.0px" width="16" height="16" viewBox="0 0 16 16"><circle cx="7.7" cy="7.4" r="6.2" fill="#b8ab92" stroke="#857762" stroke-width="2"/></svg>
<svg class="a" style="left:912.0px;top:303.0px" width="16" height="16" viewBox="0 0 16 16"><circle cx="7.7" cy="7.4" r="6.6" fill="#fff" stroke="#8a8680" stroke-width="1"/></svg>
<svg class="a" style="left:912.0px;top:327.2px" width="16" height="16" viewBox="0 0 16 16"><circle cx="7.7" cy="7.4" r="6.6" fill="#fff" stroke="#8a8680" stroke-width="1"/></svg>
<div class="a" style="left:826.5px;top:216.2px;width:138.5px;height:138.5px;border-radius:50%;border:7px solid rgba(243,141,52,0.95);background:rgba(245,140,50,0.48);"></div>
<div class="t" style="left:303.0px;top:95.7px;font-size:16px;line-height:16px;color:#000;transform:scaleX(1.087);transform-origin:0 0;font-weight:bold;letter-spacing:0.40px;-webkit-text-stroke:0.35px currentColor;">New Lunch Item</div>
<div class="a " style="left:448.0px;top:85.0px;width:72.0px;height:39.0px;background:#ebebeb;border:1px solid #8f8f8f;border-radius:3px;"></div>
<div class="a " style="left:525.0px;top:85.0px;width:84.0px;height:39.0px;background:#ebebeb;border:1px solid #8f8f8f;border-radius:3px;"></div>
<svg class="a" style="left:454.0px;top:94.0px" width="21" height="20" viewBox="0 0 21 20"><rect x="0.6" y="0.6" width="19.8" height="18.8" rx="1.5" fill="#7c98d8" stroke="#5a76bc" stroke-width="1.2"/><rect x="4" y="1" width="12.5" height="7" fill="#eef0f8"/><rect x="6" y="2" width="1.2" height="4" fill="#556"/><rect x="4" y="12.5" width="12.5" height="6.5" fill="#f4f4f0"/><rect x="5" y="14" width="10.5" height="1.3" fill="#a8c86a"/><rect x="5" y="16.3" width="10.5" height="1.3" fill="#a8c86a"/></svg>
<div class="t" style="left:479.4px;top:96.5px;font-size:14px;line-height:14px;color:#111;letter-spacing:-0.14px;">Save</div>
<svg class="a" style="left:532.0px;top:95.0px" width="19" height="18" viewBox="0 0 19 18"><path d="M5.5 0.5 H13.5 L18.5 5.5 V12.5 L13.5 17.5 H5.5 L0.5 12.5 V5.5Z" fill="#d64a2a" stroke="#c03a20" stroke-width="0.8"/><path d="M5.5 5 L13.5 13 M13.5 5 L5.5 13" stroke="#fff" stroke-width="2.8"/></svg>
<div class="t" style="left:555.6px;top:96.5px;font-size:14px;line-height:14px;color:#111;letter-spacing:0.16px;">Cancel</div>
<div class="a " style="left:309.0px;top:495.0px;width:152.0px;height:23.0px;background:#fff;border:1px solid #767676;border-radius:2px;"></div>
<div class="t" style="left:315.0px;top:498.4px;font-size:17px;line-height:17px;color:#111;letter-spacing:-0.09px;">Lunch Items List</div>
<svg class="a" style="left:444.3px;top:503.3px" width="11.5" height="7.5" viewBox="0 0 11.5 7.5"><path d="M1 1 L5.75 6.3 L10.5 1" fill="none" stroke="#262626" stroke-width="1.8"/></svg>
<div class="a " style="left:476.0px;top:492.0px;width:105.0px;height:38.0px;background:#ebebeb;border:1px solid #8f8f8f;border-radius:3px;"></div>
<div class="a " style="left:584.0px;top:492.0px;width:134.0px;height:38.0px;background:#ebebeb;border:1px solid #8f8f8f;border-radius:3px;"></div>
<div class="a " style="left:721.0px;top:493.0px;width:105.0px;height:37.0px;background:#ebebeb;border:1px solid #8f8f8f;border-radius:3px;"></div>
<svg class="a" style="left:483.0px;top:503.0px" width="21" height="20" viewBox="0 0 21 20"><rect x="0.7" y="0.7" width="18" height="16.6" rx="1" fill="#eef2fb" stroke="#a6b2d8" stroke-width="1.4"/><rect x="1.6" y="1.6" width="16.2" height="2.2" fill="#d4dcf2"/><path d="M1.6 5.5 H17.8 M1.6 8.8 H17.8 M1.6 12 H17.8 M6.5 3.8 V16.8 M12 3.8 V16.8" stroke="#b4c0e2" stroke-width="0.9"/><circle cx="15.5" cy="14.7" r="4.4" fill="#78a656" stroke="#5e8a40" stroke-width="0.7"/><path d="M15.5 12.3 V17.1 M13.1 14.7 H17.9" stroke="#fff" stroke-width="1.5"/></svg>
<div class="t" style="left:507.7px;top:504.7px;font-size:14px;line-height:14px;color:#111;">Basic Grid</div>
<svg class="a" style="left:591.0px;top:503.0px" width="22" height="20" viewBox="0 0 22 20"><rect x="0.7" y="0.7" width="18" height="16.6" rx="1" fill="#eef2fb" stroke="#a6b2d8" stroke-width="1.4"/><rect x="1.6" y="1.6" width="16.2" height="2.2" fill="#d4dcf2"/><path d="M1.6 5.5 H17.8 M1.6 8.8 H17.8 M1.6 12 H17.8 M6.5 3.8 V16.8 M12 3.8 V16.8" stroke="#b4c0e2" stroke-width="0.9"/><path d="M4.5 18.5 L2.8 19.5 L3.6 17.6 L15.5 5.5 L17.5 7.5Z" fill="#e8c860" stroke="#a88830" stroke-width="0.8"/><path d="M15.5 5.5 L17.5 7.5 L19 6 L17 4Z" fill="#d8a8a0"/></svg>
<div class="t" style="left:615.0px;top:504.7px;font-size:14px;line-height:14px;color:#111;letter-spacing:0.07px;">Advanced Grid</div>
<svg class="a" style="left:736.0px;top:502.0px" width="21" height="21" viewBox="0 0 21 21"><rect x="4.5" y="0.5" width="11.5" height="10" fill="#d4def4" stroke="#9aa8c8" stroke-width="0.8"/><path d="M2 8 H19 C20 8 20.5 9 20.5 10 V18.5 C20.5 19.5 20 20 19 20 H2 C1 20 0.5 19.5 0.5 18.5 V10 C0.5 9 1 8 2 8Z" fill="#b4b4b4" stroke="#8a8a8a" stroke-width="0.8"/><rect x="4" y="12.5" width="13" height="2.2" fill="#888"/><rect x="4" y="16.5" width="13" height="3.5" fill="#e4e4e4"/></svg>
<div class="t" style="left:761.4px;top:504.6px;font-size:14px;line-height:14px;color:#111;letter-spacing:-0.05px;">Print</div>
<svg class="a" style="left:799.5px;top:507.0px" width="10" height="9" viewBox="0 0 10 9"><path d="M0.3 0.5 L4.7 2.6 L9.2 0.5 L4.7 8.6Z" fill="#111"/></svg>
<svg class="a" style="left:835.0px;top:496.5px" width="18" height="16" viewBox="0 0 18 16"><rect x="1" y="4.5" width="6.8" height="11" rx="1" fill="#4c4c4c"/><rect x="10.2" y="4.5" width="6.8" height="11" rx="1" fill="#4c4c4c"/><rect x="2.5" y="0.5" width="4" height="5" fill="#555"/><rect x="11.5" y="0.5" width="4" height="5" fill="#555"/><rect x="7" y="6" width="4" height="4" fill="#3a3a3a"/><rect x="2" y="10" width="4.5" height="4" fill="#888"/><rect x="11.2" y="10" width="4.5" height="4" fill="#888"/></svg>
<div class="t" style="left:857.5px;top:496.2px;font-size:16px;line-height:16px;color:#111;letter-spacing:0.31px;">Comment</div>
<div class="t" style="left:943.5px;top:486.1px;font-size:13px;line-height:13px;color:#111;font-style:italic;letter-spacing:0.43px;">After Searching Press Enter, Tab or Click Out of Box</div>
<div class="a " style="left:942.0px;top:500.0px;width:332.0px;height:26.0px;background:#fdf8c5;border:1.5px solid #3a3a30;"></div>
<div class="t" style="left:946.3px;top:504.8px;font-size:17px;line-height:17px;color:#bfbca4;letter-spacing:0.13px;">Enter: Comment</div>
<div class="a " style="left:302.0px;top:542.0px;width:1183.0px;height:468.0px;background:#fafafa;border:1px solid #c9c9c9;"></div>
<div class="a " style="left:304.0px;top:544.0px;width:1159.0px;height:25.0px;background:linear-gradient(180deg,#ffffff 0px,#fdfdfd 7px,#ececef 26px);"></div>
<div class="a " style="left:304.0px;top:569.0px;width:1159.0px;height:1.0px;background:#c8c8c8;"></div>
<div class="a " style="left:352.0px;top:545.0px;width:1.0px;height:24.0px;background:#e2e2e2;"></div>
<div class="a " style="left:415.0px;top:545.0px;width:1.0px;height:24.0px;background:#e2e2e2;"></div>
<div class="a " style="left:750.0px;top:545.0px;width:1.0px;height:24.0px;background:#e2e2e2;"></div>
<div class="a " style="left:955.0px;top:545.0px;width:1.0px;height:24.0px;background:#e2e2e2;"></div>
<div class="t" style="left:317.5px;top:549.1px;font-size:14px;line-height:14px;color:#a0a0a0;letter-spacing:-0.44px;">Tag</div>
<div class="t" style="left:359.2px;top:549.1px;font-size:14px;line-height:14px;color:#a0a0a0;letter-spacing:0.88px;">Id #</div>
<div class="t" style="left:421.0px;top:549.1px;font-size:14px;line-height:14px;color:#a0a0a0;">Comment</div>
<div class="t" style="left:757.0px;top:549.1px;font-size:14px;line-height:14px;color:#a0a0a0;">Vendor</div>
<div class="a " style="left:304.0px;top:570.0px;width:1159.0px;height:26.0px;background:#e1e1e1;"></div>
<div class="a " style="left:316.0px;top:572.0px;width:26.0px;height:24.0px;background:#fff;border:2px solid #a2a2a2;border-top-color:#bdbdbd;border-left-color:#b0b0b0;border-right-color:#858585;border-bottom-color:#7a7a7a;box-shadow:inset 1px 1px 2px rgba(0,0,0,0.25), inset -1px -1px 1px rgba(0,0,0,0.15);"></div>
<div class="t" style="left:359.2px;top:575.6px;font-size:14px;line-height:14px;color:#a0a0a0;">74</div>
<div class="t" style="left:421.0px;top:575.6px;font-size:14px;line-height:14px;color:#a0a0a0;">Chicken Spaghetti, Corn, Brownie and Milk Choice</div>
<div class="t" style="left:757.0px;top:575.6px;font-size:14px;line-height:14px;color:#a0a0a0;letter-spacing:-0.14px;">Main Entree - Choose 1</div>
<div class="a " style="left:304.0px;top:596.0px;width:1159.0px;height:26.0px;background:#ffffff;"></div>
<div class="a " style="left:352.0px;top:596.0px;width:1.0px;height:26.0px;background:#dadada;"></div>
<div class="a " style="left:415.0px;top:596.0px;width:1.0px;height:26.0px;background:#dadada;"></div>
<div class="a " style="left:750.0px;top:596.0px;width:1.0px;height:26.0px;background:#dadada;"></div>
<div class="a " style="left:955.0px;top:596.0px;width:1.0px;height:26.0px;background:#dadada;"></div>
<div class="a " style="left:316.0px;top:598.0px;width:26.0px;height:24.0px;background:#fff;border:2px solid #a2a2a2;border-top-color:#bdbdbd;border-left-color:#b0b0b0;border-right-color:#858585;border-bottom-color:#7a7a7a;box-shadow:inset 1px 1px 2px rgba(0,0,0,0.25), inset -1px -1px 1px rgba(0,0,0,0.15);"></div>
<div class="t" style="left:359.2px;top:601.6px;font-size:14px;line-height:14px;color:#a0a0a0;">75</div>
<div class="t" style="left:421.0px;top:601.6px;font-size:14px;line-height:14px;color:#a0a0a0;">Chicken Tenders|Mashed Potatoes|Apple Sauce|...</div>
<div class="t" style="left:757.0px;top:601.6px;font-size:14px;line-height:14px;color:#a0a0a0;letter-spacing:-0.14px;">Main Entree - Choose 1</div>
<div class="a " style="left:304.0px;top:622.0px;width:1159.0px;height:26.0px;background:#e1e1e1;"></div>
<div class="a " style="left:316.0px;top:624.0px;width:26.0px;height:24.0px;background:#fff;border:2px solid #a2a2a2;border-top-color:#bdbdbd;border-left-color:#b0b0b0;border-right-color:#858585;border-bottom-color:#7a7a7a;box-shadow:inset 1px 1px 2px rgba(0,0,0,0.25), inset -1px -1px 1px rgba(0,0,0,0.15);"></div>
<div class="t" style="left:359.2px;top:627.6px;font-size:14px;line-height:14px;color:#a0a0a0;">11</div>
<div class="t" style="left:421.0px;top:627.6px;font-size:14px;line-height:14px;color:#a0a0a0;">Chili Dog|Chips|Fruit Cup|Milk Choice</div>
<div class="t" style="left:757.0px;top:627.6px;font-size:14px;line-height:14px;color:#a0a0a0;letter-spacing:-0.14px;">Main Entree - Choose 1</div>
<div class="a " style="left:304.0px;top:648.0px;width:1159.0px;height:26.0px;background:#ffffff;"></div>
<div class="a " style="left:352.0px;top:648.0px;width:1.0px;height:26.0px;background:#dadada;"></div>
<div class="a " style="left:415.0px;top:648.0px;width:1.0px;height:26.0px;background:#dadada;"></div>
<div class="a " style="left:750.0px;top:648.0px;width:1.0px;height:26.0px;background:#dadada;"></div>
<div class="a " style="left:955.0px;top:648.0px;width:1.0px;height:26.0px;background:#dadada;"></div>
<div class="a " style="left:316.0px;top:650.0px;width:26.0px;height:24.0px;background:#fff;border:2px solid #a2a2a2;border-top-color:#bdbdbd;border-left-color:#b0b0b0;border-right-color:#858585;border-bottom-color:#7a7a7a;box-shadow:inset 1px 1px 2px rgba(0,0,0,0.25), inset -1px -1px 1px rgba(0,0,0,0.15);"></div>
<div class="t" style="left:359.2px;top:653.6px;font-size:14px;line-height:14px;color:#a0a0a0;">5</div>
<div class="t" style="left:421.0px;top:653.6px;font-size:14px;line-height:14px;color:#a0a0a0;">Turkey Breast Meal</div>
<div class="t" style="left:757.0px;top:653.6px;font-size:14px;line-height:14px;color:#a0a0a0;letter-spacing:-0.14px;">Main Entree - Choose 1</div>
<div class="a " style="left:304.0px;top:674.0px;width:1159.0px;height:26.0px;background:#e1e1e1;"></div>
<div class="a " style="left:316.0px;top:676.0px;width:26.0px;height:24.0px;background:#fff;border:2px solid #a2a2a2;border-top-color:#bdbdbd;border-left-color:#b0b0b0;border-right-color:#858585;border-bottom-color:#7a7a7a;box-shadow:inset 1px 1px 2px rgba(0,0,0,0.25), inset -1px -1px 1px rgba(0,0,0,0.15);"></div>
<div class="t" style="left:359.2px;top:679.6px;font-size:14px;line-height:14px;color:#a0a0a0;">41</div>
<div class="t" style="left:421.0px;top:679.6px;font-size:14px;line-height:14px;color:#a0a0a0;">PBJ/Sandwich</div>
<div class="t" style="left:757.0px;top:679.6px;font-size:14px;line-height:14px;color:#a0a0a0;letter-spacing:-0.14px;">Main Entree - Choose 1</div>
<div class="a " style="left:304.0px;top:700.0px;width:1159.0px;height:26.0px;background:#ffffff;"></div>
<div class="a " style="left:352.0px;top:700.0px;width:1.0px;height:26.0px;background:#dadada;"></div>
<div class="a " style="left:415.0px;top:700.0px;width:1.0px;height:26.0px;background:#dadada;"></div>
<div class="a " style="left:750.0px;top:700.0px;width:1.0px;height:26.0px;background:#dadada;"></div>
<div class="a " style="left:955.0px;top:700.0px;width:1.0px;height:26.0px;background:#dadada;"></div>
<div class="a " style="left:316.0px;top:702.0px;width:26.0px;height:24.0px;background:#fff;border:2px solid #a2a2a2;border-top-color:#bdbdbd;border-left-color:#b0b0b0;border-right-color:#858585;border-bottom-color:#7a7a7a;box-shadow:inset 1px 1px 2px rgba(0,0,0,0.25), inset -1px -1px 1px rgba(0,0,0,0.15);"></div>
<div class="t" style="left:359.2px;top:705.6px;font-size:14px;line-height:14px;color:#a0a0a0;">36</div>
<div class="t" style="left:421.0px;top:705.6px;font-size:14px;line-height:14px;color:#a0a0a0;">Cheese Calzone|Yogurt Pop|Milk Choice</div>
<div class="t" style="left:757.0px;top:705.6px;font-size:14px;line-height:14px;color:#a0a0a0;">PIZZA HUT</div>
<div class="a " style="left:304.0px;top:726.0px;width:1159.0px;height:26.0px;background:#e1e1e1;"></div>
<div class="a " style="left:316.0px;top:728.0px;width:26.0px;height:24.0px;background:#fff;border:2px solid #a2a2a2;border-top-color:#bdbdbd;border-left-color:#b0b0b0;border-right-color:#858585;border-bottom-color:#7a7a7a;box-shadow:inset 1px 1px 2px rgba(0,0,0,0.25), inset -1px -1px 1px rgba(0,0,0,0.15);"></div>
<div class="t" style="left:359.2px;top:731.6px;font-size:14px;line-height:14px;color:#a0a0a0;">20</div>
<div class="t" style="left:421.0px;top:731.6px;font-size:14px;line-height:14px;color:#a0a0a0;">Fried Burrito- Taco Bell</div>
<div class="t" style="left:757.0px;top:731.6px;font-size:14px;line-height:14px;color:#a0a0a0;">Taco Bell</div>
<div class="a " style="left:304.0px;top:752.0px;width:1159.0px;height:26.0px;background:#ffffff;"></div>
<div class="a " style="left:352.0px;top:752.0px;width:1.0px;height:26.0px;background:#dadada;"></div>
<div class="a " style="left:415.0px;top:752.0px;width:1.0px;height:26.0px;background:#dadada;"></div>
<div class="a " style="left:750.0px;top:752.0px;width:1.0px;height:26.0px;background:#dadada;"></div>
<div class="a " style="left:955.0px;top:752.0px;width:1.0px;height:26.0px;background:#dadada;"></div>
<div class="a " style="left:316.0px;top:754.0px;width:26.0px;height:24.0px;background:#fff;border:2px solid #a2a2a2;border-top-color:#bdbdbd;border-left-color:#b0b0b0;border-right-color:#858585;border-bottom-color:#7a7a7a;box-shadow:inset 1px 1px 2px rgba(0,0,0,0.25), inset -1px -1px 1px rgba(0,0,0,0.15);"></div>
<div class="t" style="left:359.2px;top:757.6px;font-size:14px;line-height:14px;color:#a0a0a0;">134</div>
<div class="t" style="left:421.0px;top:757.6px;font-size:14px;line-height:14px;color:#a0a0a0;">*Transfer from AR</div>
<div class="a " style="left:304.0px;top:778.0px;width:1159.0px;height:26.0px;background:#e1e1e1;"></div>
<div class="a " style="left:316.0px;top:780.0px;width:26.0px;height:24.0px;background:#fff;border:2px solid #a2a2a2;border-top-color:#bdbdbd;border-left-color:#b0b0b0;border-right-color:#858585;border-bottom-color:#7a7a7a;box-shadow:inset 1px 1px 2px rgba(0,0,0,0.25), inset -1px -1px 1px rgba(0,0,0,0.15);"></div>
<div class="t" style="left:359.2px;top:783.6px;font-size:14px;line-height:14px;color:#a0a0a0;">124</div>
<div class="t" style="left:421.0px;top:783.6px;font-size:14px;line-height:14px;color:#a0a0a0;">Cheeseburger</div>
<div class="a " style="left:304.0px;top:804.0px;width:1159.0px;height:26.0px;background:#ffffff;"></div>
<div class="a " style="left:352.0px;top:804.0px;width:1.0px;height:26.0px;background:#dadada;"></div>
<div class="a " style="left:415.0px;top:804.0px;width:1.0px;height:26.0px;background:#dadada;"></div>
<div class="a " style="left:750.0px;top:804.0px;width:1.0px;height:26.0px;background:#dadada;"></div>
<div class="a " style="left:955.0px;top:804.0px;width:1.0px;height:26.0px;background:#dadada;"></div>
<div class="a " style="left:316.0px;top:806.0px;width:26.0px;height:24.0px;background:#fff;border:2px solid #a2a2a2;border-top-color:#bdbdbd;border-left-color:#b0b0b0;border-right-color:#858585;border-bottom-color:#7a7a7a;box-shadow:inset 1px 1px 2px rgba(0,0,0,0.25), inset -1px -1px 1px rgba(0,0,0,0.15);"></div>
<div class="t" style="left:359.2px;top:809.6px;font-size:14px;line-height:14px;color:#a0a0a0;">131</div>
<div class="t" style="left:421.0px;top:809.6px;font-size:14px;line-height:14px;color:#a0a0a0;">Chicken Broccoli Casserole|Fruit Cup|Milk Choice</div>
<div class="a " style="left:304.0px;top:830.0px;width:1159.0px;height:26.0px;background:#e1e1e1;"></div>
<div class="a " style="left:316.0px;top:832.0px;width:26.0px;height:24.0px;background:#fff;border:2px solid #a2a2a2;border-top-color:#bdbdbd;border-left-color:#b0b0b0;border-right-color:#858585;border-bottom-color:#7a7a7a;box-shadow:inset 1px 1px 2px rgba(0,0,0,0.25), inset -1px -1px 1px rgba(0,0,0,0.15);"></div>
<div class="t" style="left:359.2px;top:835.6px;font-size:14px;line-height:14px;color:#a0a0a0;">127</div>
<div class="t" style="left:421.0px;top:835.6px;font-size:14px;line-height:14px;color:#a0a0a0;">Cookie</div>
<div class="a " style="left:304.0px;top:856.0px;width:1159.0px;height:26.0px;background:#ffffff;"></div>
<div class="a " style="left:352.0px;top:856.0px;width:1.0px;height:26.0px;background:#dadada;"></div>
<div class="a " style="left:415.0px;top:856.0px;width:1.0px;height:26.0px;background:#dadada;"></div>
<div class="a " style="left:750.0px;top:856.0px;width:1.0px;height:26.0px;background:#dadada;"></div>
<div class="a " style="left:955.0px;top:856.0px;width:1.0px;height:26.0px;background:#dadada;"></div>
<div class="a " style="left:316.0px;top:858.0px;width:26.0px;height:24.0px;background:#fff;border:2px solid #a2a2a2;border-top-color:#bdbdbd;border-left-color:#b0b0b0;border-right-color:#858585;border-bottom-color:#7a7a7a;box-shadow:inset 1px 1px 2px rgba(0,0,0,0.25), inset -1px -1px 1px rgba(0,0,0,0.15);"></div>
<div class="t" style="left:359.2px;top:861.6px;font-size:14px;line-height:14px;color:#a0a0a0;">132</div>
<div class="t" style="left:421.0px;top:861.6px;font-size:14px;line-height:14px;color:#a0a0a0;">Grilled Chicken|Seasoned Vegetables|Rice</div>
<div class="a " style="left:304.0px;top:882.0px;width:1159.0px;height:26.0px;background:#e1e1e1;"></div>
<div class="a " style="left:316.0px;top:884.0px;width:26.0px;height:24.0px;background:#fff;border:2px solid #a2a2a2;border-top-color:#bdbdbd;border-left-color:#b0b0b0;border-right-color:#858585;border-bottom-color:#7a7a7a;box-shadow:inset 1px 1px 2px rgba(0,0,0,0.25), inset -1px -1px 1px rgba(0,0,0,0.15);"></div>
<div class="t" style="left:359.2px;top:887.6px;font-size:14px;line-height:14px;color:#a0a0a0;">128</div>
<div class="t" style="left:421.0px;top:887.6px;font-size:14px;line-height:14px;color:#a0a0a0;">Ice Cream</div>
<div class="a " style="left:304.0px;top:908.0px;width:1159.0px;height:26.0px;background:#ffffff;"></div>
<div class="a " style="left:352.0px;top:908.0px;width:1.0px;height:26.0px;background:#dadada;"></div>
<div class="a " style="left:415.0px;top:908.0px;width:1.0px;height:26.0px;background:#dadada;"></div>
<div class="a " style="left:750.0px;top:908.0px;width:1.0px;height:26.0px;background:#dadada;"></div>
<div class="a " style="left:955.0px;top:908.0px;width:1.0px;height:26.0px;background:#dadada;"></div>
<div class="a " style="left:316.0px;top:910.0px;width:26.0px;height:24.0px;background:#fff;border:2px solid #a2a2a2;border-top-color:#bdbdbd;border-left-color:#b0b0b0;border-right-color:#858585;border-bottom-color:#7a7a7a;box-shadow:inset 1px 1px 2px rgba(0,0,0,0.25), inset -1px -1px 1px rgba(0,0,0,0.15);"></div>
<div class="t" style="left:359.2px;top:913.6px;font-size:14px;line-height:14px;color:#a0a0a0;">108</div>
<div class="t" style="left:421.0px;top:913.6px;font-size:14px;line-height:14px;color:#a0a0a0;">Meat Lasagna|Salad|Garlic Bread</div>
<div class="a " style="left:304.0px;top:934.0px;width:1159.0px;height:26.0px;background:#e1e1e1;"></div>
<div class="a " style="left:316.0px;top:936.0px;width:26.0px;height:24.0px;background:#fff;border:2px solid #a2a2a2;border-top-color:#bdbdbd;border-left-color:#b0b0b0;border-right-color:#858585;border-bottom-color:#7a7a7a;box-shadow:inset 1px 1px 2px rgba(0,0,0,0.25), inset -1px -1px 1px rgba(0,0,0,0.15);"></div>
<div class="t" style="left:359.2px;top:939.6px;font-size:14px;line-height:14px;color:#a0a0a0;">129</div>
<div class="t" style="left:421.0px;top:939.6px;font-size:14px;line-height:14px;color:#a0a0a0;">Rice Crispy Treat</div>
<div class="a " style="left:304.0px;top:960.0px;width:1159.0px;height:26.0px;background:#ffffff;"></div>
<div class="a " style="left:352.0px;top:960.0px;width:1.0px;height:26.0px;background:#dadada;"></div>
<div class="a " style="left:415.0px;top:960.0px;width:1.0px;height:26.0px;background:#dadada;"></div>
<div class="a " style="left:750.0px;top:960.0px;width:1.0px;height:26.0px;background:#dadada;"></div>
<div class="a " style="left:955.0px;top:960.0px;width:1.0px;height:26.0px;background:#dadada;"></div>
<div class="a " style="left:316.0px;top:962.0px;width:26.0px;height:24.0px;background:#fff;border:2px solid #a2a2a2;border-top-color:#bdbdbd;border-left-color:#b0b0b0;border-right-color:#858585;border-bottom-color:#7a7a7a;box-shadow:inset 1px 1px 2px rgba(0,0,0,0.25), inset -1px -1px 1px rgba(0,0,0,0.15);"></div>
<div class="t" style="left:359.2px;top:965.6px;font-size:14px;line-height:14px;color:#a0a0a0;">125</div>
<div class="t" style="left:421.0px;top:965.6px;font-size:14px;line-height:14px;color:#a0a0a0;">Sloppy Joe Sandwich|Goldfish|Fresh Fruit|Milk Ch...</div>
<div class="a " style="left:304.0px;top:986.0px;width:1159.0px;height:26.0px;background:#e1e1e1;"></div>
<div class="a " style="left:316.0px;top:988.0px;width:26.0px;height:24.0px;background:#fff;border:2px solid #a2a2a2;border-top-color:#bdbdbd;border-left-color:#b0b0b0;border-right-color:#858585;border-bottom-color:#7a7a7a;box-shadow:inset 1px 1px 2px rgba(0,0,0,0.25), inset -1px -1px 1px rgba(0,0,0,0.15);"></div>
<div class="t" style="left:359.2px;top:991.6px;font-size:14px;line-height:14px;color:#a0a0a0;">126</div>
<div class="t" style="left:421.0px;top:991.6px;font-size:14px;line-height:14px;color:#a0a0a0;">Snack Item</div>
<svg class="a" style="left:1465.5px;top:549.5px" width="13" height="10" viewBox="0 0 13 10"><path d="M6.5 1 L12 9 L1 9Z" fill="#878787" stroke="#878787" stroke-width="1.5" stroke-linejoin="round"/></svg>
<div class="a " style="left:1467.0px;top:692.0px;width:11.0px;height:218.0px;background:#8b8b8b;border-radius:5.5px;"></div>
</body></html>
